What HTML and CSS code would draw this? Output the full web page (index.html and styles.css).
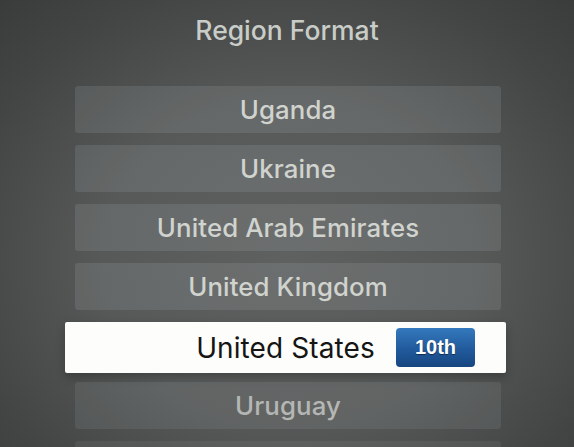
FILE: index.html
```html
<!DOCTYPE html>
<html>
<head>
<meta charset="utf-8">
<link rel="stylesheet" href="styles.css">
</head>
<body>
<div class="screen">
  <h1 class="title">Region Format</h1>
  <div class="list">
    <div class="row">Uganda</div>
    <div class="row">Ukraine</div>
    <div class="row">United Arab Emirates</div>
    <div class="row">United Kingdom</div>
    <div class="row selected">United States<span class="badge">10th</span></div>
    <div class="row fade">Uruguay</div>
    <div class="row fade2"></div>
  </div>
</div>
</body>
</html>
```
FILE: styles.css
```css
html, body {
  margin: 0;
  padding: 0;
}
body {
  width: 574px;
  height: 447px;
  overflow: hidden;
  background: #474949;
}
.screen {
  width: 574px;
  height: 447px;
  overflow: hidden;
  background: radial-gradient(ellipse 420px 360px at 290px 260px, #5f6161 0%, #575959 45%, #434545 80%, #3a3c3c 100%);
  font-family: "Inter", "Open Sans", sans-serif;
}
.title {
  margin: 0;
  height: 86px;
  padding-top: 14px;
  box-sizing: border-box;
  text-align: center;
  font-size: 26.5px;
  font-weight: 500;
  color: #c9cdc8;
  letter-spacing: 0;
  line-height: 32px;
}
.list {
  display: flex;
  flex-direction: column;
  gap: 12px;
  padding: 0 73px 0 75px;
}
.row {
  height: 47px;
  flex: none;
  display: flex;
  align-items: center;
  justify-content: center;
  background: rgba(200, 205, 205, 0.13);
  border-radius: 3px;
  color: #d0d3ce;
  font-size: 25.8px;
  font-weight: 500;
  letter-spacing: 0.1px;
  position: relative;
}
.row.selected {
  height: 51px;
  margin: 0 -5px -3px -10px;
  background: #fdfdfb;
  color: #151515;
  font-size: 28px;
  font-weight: 400;
  border-radius: 2px;
  box-shadow: 0 4px 10px rgba(0, 0, 0, 0.25);
}
.badge {
  position: absolute;
  left: 331px;
  top: 6px;
  width: 79px;
  height: 39px;
  border-radius: 4px;
  background: linear-gradient(#3479bd, #215a9c 55%, #174680);
  color: #ffffff;
  font-family: "Liberation Sans", Arial, sans-serif;
  font-weight: 700;
  font-size: 20px;
  letter-spacing: 0;
  display: flex;
  align-items: center;
  justify-content: center;
  text-shadow: 0 1px 1px rgba(0, 0, 0, 0.5);
}
.row.fade {
  color: #b4b7b4;
  background: rgba(200, 205, 205, 0.1);
}
.row.fade2 {
  background: rgba(200, 205, 205, 0.08);
}
```
